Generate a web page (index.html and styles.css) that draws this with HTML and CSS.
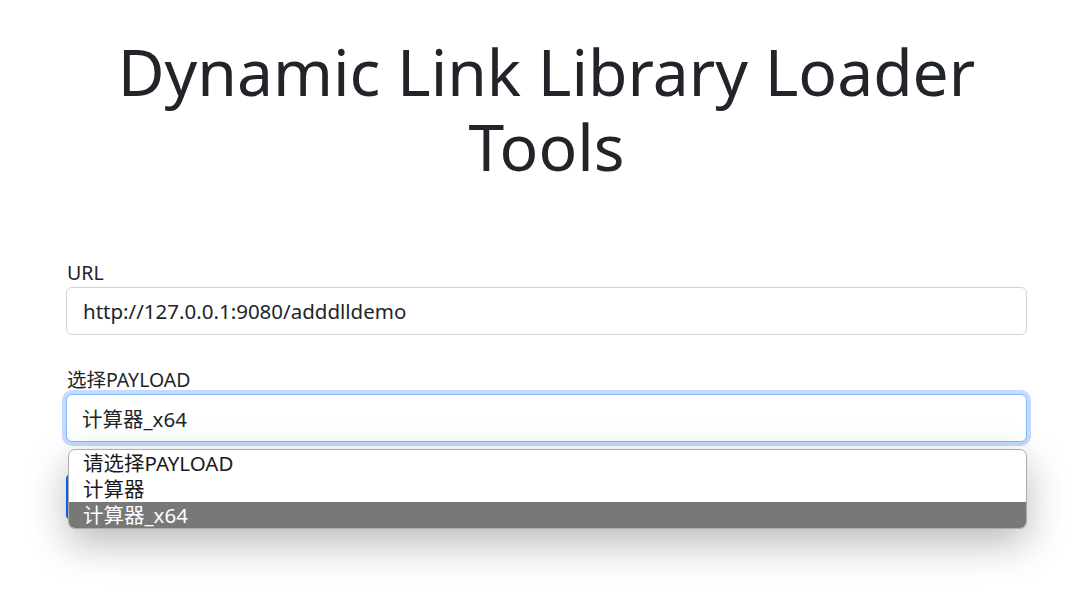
FILE: index.html
```html
<!DOCTYPE html>
<html lang="zh-CN">
<head>
<meta charset="utf-8">
<title>Dynamic Link Library Loader Tools</title>
<link rel="stylesheet" href="styles.css">
</head>
<body>
<main class="page">
  <h1 class="title">Dynamic Link Library Loader Tools</h1>
  <form class="form">
    <div class="field">
      <label class="label" for="url">URL</label>
      <input class="control" id="url" type="text" value="http://127.0.0.1:9080/adddlldemo">
    </div>
    <div class="field">
      <label class="label">选择PAYLOAD</label>
      <div class="select-wrap">
        <div class="control select focused">计算器_x64</div>
        <ul class="popup">
          <li class="option">请选择PAYLOAD</li>
          <li class="option">计算器</li>
          <li class="option selected">计算器_x64</li>
        </ul>
      </div>
    </div>
    <div class="actions">
      <button class="btn" type="button">提交</button>
    </div>
  </form>
</main>
</body>
</html>
```

FILE: styles.css
```css
html, body {
  margin: 0;
  padding: 0;
  background: #ffffff;
  min-height: 596px;
}
body {
  font-family: "Noto Sans", "Noto Sans CJK SC", sans-serif;
  color: #212529;
  font-size: 20px;
}
.page {
  padding: 0 47px 80px 66px;
  display: flex;
  flex-direction: column;
}
.title {
  margin: 34px 0 0 0;
  text-align: center;
  font-weight: 400;
  font-size: 64.2px;
  line-height: 75px;
  padding: 0;
}
.form {
  margin-top: 75px;
  display: flex;
  flex-direction: column;
}
.field {
  display: flex;
  flex-direction: column;
  margin-bottom: 31px;
}
.label {
  font-size: 19.5px;
  line-height: 27px;
  margin-bottom: 1px;
  padding-left: 1px;
}
.control {
  box-sizing: border-box;
  height: 48px;
  border: 1px solid #ced4da;
  border-radius: 6px;
  padding: 0 16px;
  font-family: inherit;
  font-size: 20.5px;
  color: #212529;
  background: #fff;
  outline: none;
}
.select {
  display: flex;
  align-items: center;
  padding-left: 15px;
}
.focused {
  border-color: #86b7fe;
  box-shadow: 0 0 0 4px rgba(13, 110, 253, 0.25);
}
.select-wrap {
  position: relative;
}
.popup {
  position: absolute;
  left: 2px;
  right: 0;
  top: 55px;
  margin: 0;
  padding: 0;
  list-style: none;
  background: #fff;
  border: 1px solid #adadad;
  border-radius: 7px;
  overflow: hidden;
  box-shadow: 0 14px 40px rgba(0, 0, 0, 0.28);
  z-index: 5;
}
.option {
  height: 26px;
  line-height: 26px;
  padding-left: 14px;
  font-size: 20.5px;
  color: #1a1a1a;
}
.option.selected {
  background: #787878;
  color: #ffffff;
}
.actions {
  margin-top: 0;
}
.btn {
  height: 48px;
  padding: 0 24px;
  border: 1px solid #0d6efd;
  background: #0d6efd;
  color: #fff;
  border-radius: 6px;
  font-family: inherit;
  font-size: 20px;
}
```
